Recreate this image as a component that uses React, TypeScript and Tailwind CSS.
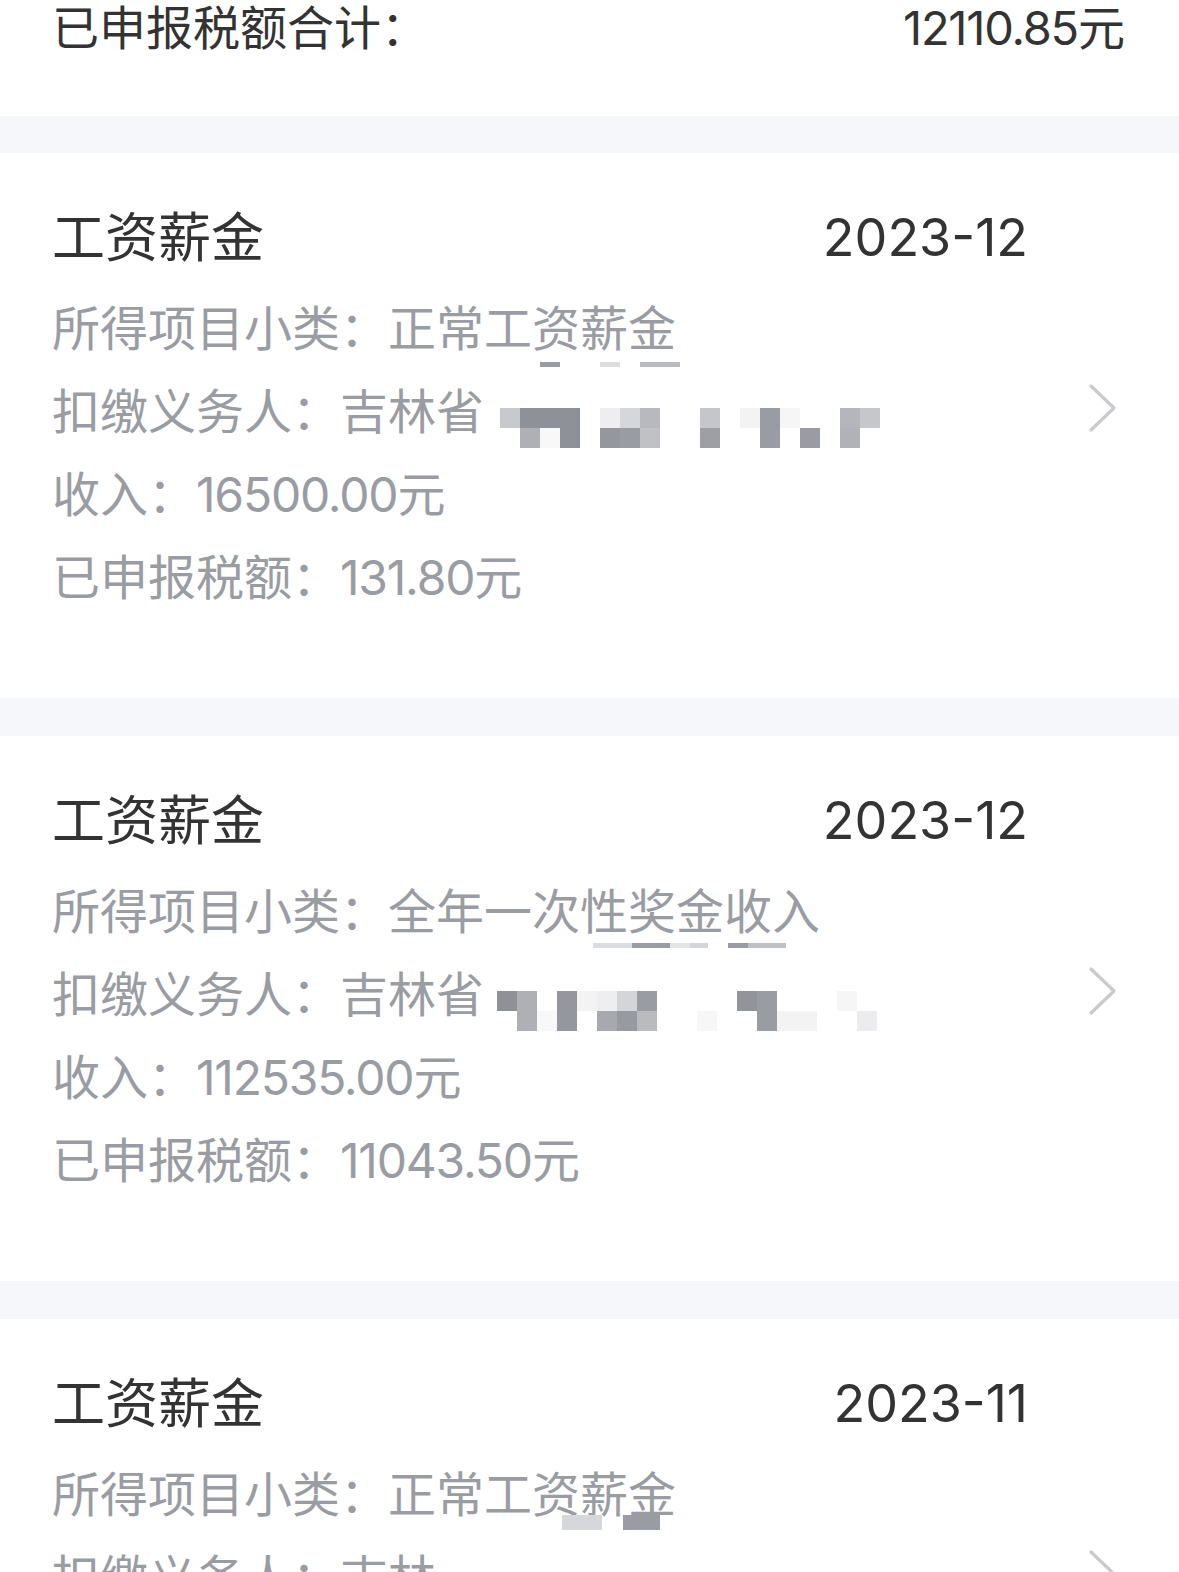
import React from "react";

type Cell = string;

const FONT = "font-['Inter','Noto_Sans_CJK_SC',sans-serif]";

function Mosaic({ rows, size }: { rows: Cell[][]; size: number }) {
  return (
    <div className="flex flex-col">
      {rows.map((r, i) => (
        <div key={i} className="flex">
          {r.map((c, j) => (
            <div
              key={j}
              style={{ width: size, height: size, backgroundColor: c || "transparent" }}
            />
          ))}
        </div>
      ))}
    </div>
  );
}

function Bits({ bits, top, h }: { bits: [number, number, string][]; top: number; h: number }) {
  return (
    <>
      {bits.map(([x, w, c], i) => (
        <div
          key={i}
          className="absolute"
          style={{ left: x, top, width: w, height: h, backgroundColor: c }}
        />
      ))}
    </>
  );
}

function Chevron() {
  return (
    <svg width="34" height="50" viewBox="0 0 34 50" fill="none" className="shrink-0 -translate-y-[3px]">
      <path d="M5 3 L28 25 L5 47" stroke="#c9c9ce" strokeWidth="3.2" strokeLinecap="round" strokeLinejoin="round" />
    </svg>
  );
}

type CardData = {
  date: string;
  sub: string;
  payerText: string;
  mosaic: Cell[][];
  mosaicSize: number;
  mosaicGap: number;
  subBits: [number, number, string][];
  subBitsTop: number;
  subBitsH: number;
  income: string;
  tax: string;
};

function Row({ children, className = "" }: { children: React.ReactNode; className?: string }) {
  return <div className={`relative flex h-[83px] items-center whitespace-nowrap ${className}`}>{children}</div>;
}

function Num({ children }: { children: React.ReactNode }) {
  return <span className="tracking-[-1.2px]">{children}</span>;
}

function Card({ d }: { d: CardData }) {
  return (
    <div className="flex items-center bg-white pl-[52px] pr-[59px] pt-[50px] pb-[79px]">
      <div className="flex-1">
        <div className="flex h-[70px] items-center justify-between text-[#333333]">
          <span className="text-[53px] leading-none">工资薪金</span>
          <span className="text-[52px] leading-none">{d.date}</span>
        </div>
        <div className="mt-[14px] text-[48px] leading-none text-[#9a9ca3]">
          <Row>
            <span>所得项目小类：{d.sub}</span>
            <Bits bits={d.subBits} top={d.subBitsTop} h={d.subBitsH} />
          </Row>
          <Row>
            <span>扣缴义务人：{d.payerText}</span>
            <div className="translate-y-[16px]" style={{ marginLeft: d.mosaicGap }}>
              <Mosaic rows={d.mosaic} size={d.mosaicSize} />
            </div>
          </Row>
          <Row>
            <span>
              收入：<Num>{d.income}</Num>元
            </span>
          </Row>
          <Row>
            <span>
              已申报税额：<Num>{d.tax}</Num>元
            </span>
          </Row>
        </div>
      </div>
      <div className="ml-[58px]">
        <Chevron />
      </div>
    </div>
  );
}

const D = "#8f9199";
const G = "#9a9ca3";

const cards: CardData[] = [
  {
    date: "2023-12",
    sub: "正常工资薪金",
    payerText: "吉林省",
    mosaicGap: 16,
    mosaicSize: 20,
    mosaic: [
      ["#c8c9cd", D, D, D, "", "#eeeef0", "#d6d7da", "#b7b9bf", "", "", "#c5c6ca", "", "#f3f3f4", G, "#f6f6f7", "", "", "#b4b6bb", "#c6c7cb"],
      ["", "#aeb0b6", "#f8f8f9", D, "", "#95979f", G, "#c0c1c5", "", "", "#9d9fa5", "", "", G, "", G, "", "#b0b2b7", ""],
    ],
    subBits: [
      [488, 20, G],
      [548, 20, "#dcdde0"],
      [588, 40, "#b9bbbf"],
    ],
    subBitsTop: 75,
    subBitsH: 5,
    income: "16500.00",
    tax: "131.80",
  },
  {
    date: "2023-12",
    sub: "全年一次性奖金收入",
    payerText: "吉林省",
    mosaicGap: 13,
    mosaicSize: 20,
    mosaic: [
      [D, "#aeb0b6", "", "#95979f", "#f3f3f4", "#eeeef0", "#d4d5d8", G, "", "", "", "", "#92949b", G, "", "", "", "#f6f6f7", ""],
      ["", "#aeb0b6", "#f8f8f9", "#95979f", "", "#a7a9ae", "#979aa1", "#b9bbbf", "", "", "#f7f7f8", "", "", G, "#f3f3f4", "#f3f3f4", "", "", "#ececee"],
    ],
    subBits: [
      [541, 39, "#dcdde0"],
      [580, 38, G],
      [618, 20, "#e4e5e7"],
      [638, 18, "#d4d5d8"],
      [676, 20, G],
      [696, 38, "#c0c1c5"],
    ],
    subBitsTop: 73,
    subBitsH: 5,
    income: "112535.00",
    tax: "11043.50",
  },
  {
    date: "2023-11",
    sub: "正常工资薪金",
    payerText: "吉林",
    mosaicGap: 0,
    mosaicSize: 19,
    mosaic: [
      [G, "#e4e5e7", "", "#b4b6bb", "", G, G, "", "#e6e7e9", "#dcdde0", "#c0c1c5", "#eeeeef", "#d4d5d8", "", "", "#c0c1c5", "", "", G, "", "", "", G, "#e4e5e7"],
      ["", "#c0c1c5", "", "", "#e4e5e7", G, "", "", "", "#b4b6bb", "", "", "", "", "", "", "", "", "", "", "", "", "", ""],
    ],
    subBits: [
      [571, 37, G],
      [510, 40, "#d6d7da"],
    ],
    subBitsTop: 62,
    subBitsH: 15,
    income: "16500.00",
    tax: "131.80",
  },
];

function Sep() {
  return <div className="h-[38px] bg-[#f6f7fa]" />;
}

export default function App() {
  return (
    <div className={`w-[1179px] bg-[#f6f7fa] ${FONT}`}>
      <div className="flex h-[116px] items-start justify-between bg-white pl-[52px] pr-[54px] text-[#333333]">
        <span className="flex h-[54px] items-center text-[47px] leading-none">已申报税额合计：</span>
        <span className="flex h-[54px] items-center text-[47px] leading-none">
          <Num>12110.85</Num>元
        </span>
      </div>
      <div className="h-[37px] bg-[#f6f7fa]" />
      <Card d={cards[0]} />
      <Sep />
      <Card d={cards[1]} />
      <Sep />
      <Card d={cards[2]} />
    </div>
  );
}
